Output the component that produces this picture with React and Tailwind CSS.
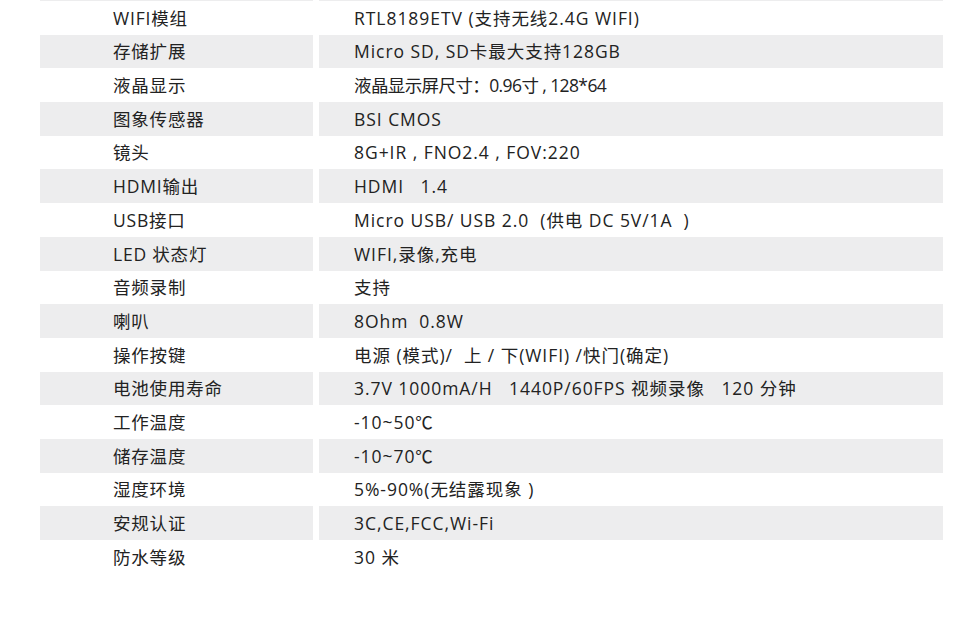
import React from 'react';

const specs = [
  ['WIFI模组', 'RTL8189ETV (支持无线2.4G WIFI)'],
  ['存储扩展', 'Micro SD, SD卡最大支持128GB'],
  ['液晶显示', '液晶显示屏尺寸：0.96寸 , 128*64'],
  ['图象传感器', 'BSI CMOS'],
  ['镜头', '8G+IR , FNO2.4 , FOV:220'],
  ['HDMI输出', 'HDMI   1.4'],
  ['USB接口', 'Micro USB/ USB 2.0  (供电 DC 5V/1A  )'],
  ['LED 状态灯', 'WIFI,录像,充电'],
  ['音频录制', '支持'],
  ['喇叭', '8Ohm  0.8W'],
  ['操作按键', '电源 (模式)/  上 / 下(WIFI) /快门(确定)'],
  ['电池使用寿命', '3.7V 1000mA/H   1440P/60FPS 视频录像   120 分钟'],
  ['工作温度', '-10~50℃'],
  ['储存温度', '-10~70℃'],
  ['湿度环境', '5%-90%(无结露现象 )'],
  ['安规认证', '3C,CE,FCC,Wi-Fi'],
  ['防水等级', '30 米'],
];

export default function App() {
  return (
    <div
      className="w-[980px] h-[624px] bg-white overflow-hidden text-[#222] text-[17.5px]"
      style={{ fontFamily: '"Open Sans", "Noto Sans CJK SC", sans-serif' }}
    >
      <div className="ml-[40px] w-[903px] flex flex-col">
        <div className="flex gap-[6px] h-px">
          <div className="w-[273px] bg-[#ededee]" />
          <div className="flex-1 bg-[#ededee]" />
        </div>
        {specs.map(([label, value], i) => {
          const shade = i % 2 === 1 ? 'bg-[#ededee]' : 'bg-white';
          return (
            <div key={label} className="flex gap-[6px] h-[33.7px]">
              <div className={`w-[273px] flex items-center pl-[73px] tracking-[0.8px] ${shade}`}>{label}</div>
              <div className={`flex-1 flex items-center pl-[35px] whitespace-pre ${shade} ${i === 2 ? 'tracking-[-0.6px]' : 'tracking-[0.95px]'}`}>{value}</div>
            </div>
          );
        })}
      </div>
    </div>
  );
}
